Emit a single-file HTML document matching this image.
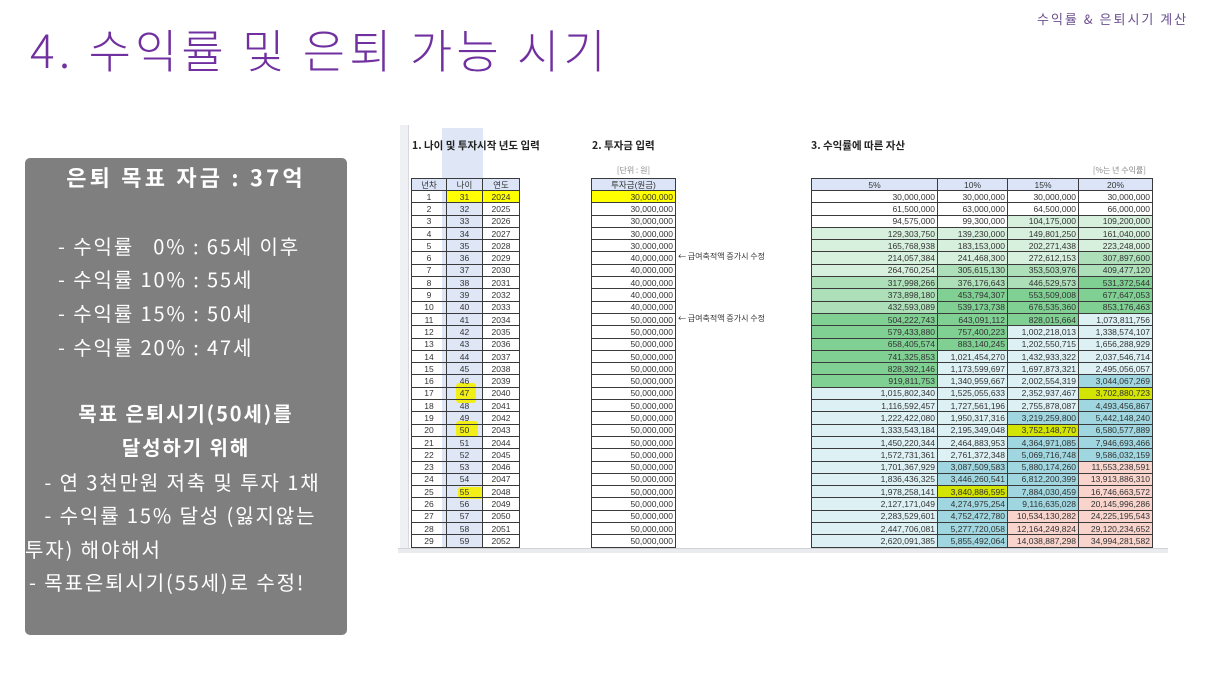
<!DOCTYPE html>
<html><head><meta charset="utf-8"><style>
body{margin:0;width:1216px;height:684px;background:#fff;position:relative;overflow:hidden;font-family:"Liberation Sans","Noto Sans CJK KR",sans-serif}
.a{position:absolute;white-space:nowrap}
.title{left:30px;top:16px;font-size:46px;color:#7030a0;font-weight:300;font-family:"Noto Sans CJK KR",sans-serif;letter-spacing:4.1px}
.tr{left:1037px;top:9px;font-size:13px;color:#6b4f8f;font-family:"Noto Sans CJK KR",sans-serif;letter-spacing:2px}
.box{left:25px;top:158px;width:322px;height:477px;background:#7f7f7f;border-radius:5px}
.w{color:#fff;font-family:"Noto Sans CJK KR",sans-serif;font-size:20px;line-height:24px;letter-spacing:1.9px}
.clip{position:absolute;left:398px;top:125px;width:770px;height:428px;overflow:hidden}
table{border-collapse:collapse;table-layout:fixed;position:absolute;font-size:8.5px;color:#333;font-family:"Liberation Sans","Noto Sans CJK KR",sans-serif}
td{border:1px solid #3a3a3a;height:11.3px;padding:0 2px;line-height:10px;overflow:hidden;white-space:nowrap}
table.c td{text-align:center}
table.r td{text-align:right}
tr.h td{background:#dbe5f7;text-align:center;height:11px}
.y{background:#ffff00}
.L{background:#d7f0dd}.M{background:#ade0b9}.S{background:#80cf93}.C{background:#ddf1f5}.D{background:#9fd6df}.P{background:#f8d4cd}
.hy{background:#d2e400}
.sec{font-size:10.5px;font-weight:bold;color:#222;font-family:"Noto Sans CJK KR",sans-serif}
.sm{font-size:8px;color:#888;font-family:"Noto Sans CJK KR",sans-serif}
.note{font-size:8px;color:#333;font-family:"Noto Sans CJK KR",sans-serif}
.mk{position:absolute;background:#f4f000;opacity:.9;border-radius:3px}
</style></head><body>
<div class="a title">4. 수익률 및 은퇴 가능 시기</div>
<div class="a tr">수익률 &amp; 은퇴시기 계산</div>
<div class="a box"></div>
<div class="a w" style="left:25px;width:322px;text-align:center;top:165px;font-size:22px;font-weight:bold;letter-spacing:3.2px">은퇴 목표 자금 : 37억</div>
<div class="a w" style="left:58px;top:234px">- 수익률 &nbsp;&nbsp;0% : 65세 이후</div>
<div class="a w" style="left:58px;top:267px">- 수익률 10% : 55세</div>
<div class="a w" style="left:58px;top:301px">- 수익률 15% : 50세</div>
<div class="a w" style="left:58px;top:335px">- 수익률 20% : 47세</div>
<div class="a w" style="left:25px;width:322px;text-align:center;top:401px;font-weight:bold">목표 은퇴시기(50세)를</div>
<div class="a w" style="left:25px;width:322px;text-align:center;top:435px;font-weight:bold">달성하기 위해</div>
<div class="a w" style="left:38px;top:470px">&nbsp;- 연 3천만원 저축 및 투자 1채</div>
<div class="a w" style="left:38px;top:503px">&nbsp;- 수익률 15% 달성 (잃지않는</div>
<div class="a w" style="left:25px;top:537px">투자) 해야해서</div>
<div class="a w" style="left:29px;top:570px">- 목표은퇴시기(55세)로 수정!</div>

<div class="clip">
<div style="position:absolute;left:2px;top:0;width:8px;height:428px;background:#eef0f3;border-right:1px solid #d6d9de"></div>
<div style="position:absolute;left:44px;top:3px;width:41px;height:425px;background:#dfe6f6"></div>
<div class="mk" style="left:58px;top:258px;width:20px;height:20px"></div>
<div class="mk" style="left:58px;top:296px;width:22px;height:16px"></div>
<div class="mk" style="left:60px;top:362px;width:25px;height:12px"></div>
<div class="a sec" style="left:14px;top:13px">1. 나이 및 투자시작 년도 입력</div>
<div class="a sec" style="left:194px;top:13px">2. 투자금 입력</div>
<div class="a sec" style="left:413px;top:13px">3. 수익률에 따른 자산</div>
<div class="a sm" style="left:193px;width:85px;text-align:center;top:40px">[단위 : 원]</div>
<div class="a sm" style="left:660px;width:88px;text-align:right;top:40px">[%는 년 수익률]</div>
<div class="a note" style="left:280px;top:126px">← 급여축적액 증가시 수정</div>
<div class="a note" style="left:280px;top:188px">← 급여축적액 증가시 수정</div>

<table class="c" style="left:13px;top:53px;width:108px">
<colgroup><col style="width:35px"><col style="width:36px"><col style="width:37px"></colgroup>
<tr class="h"><td>년차</td><td>나이</td><td>연도</td></tr>
<tr><td>1</td><td class="y">31</td><td class="y">2024</td></tr>
<tr><td>2</td><td>32</td><td>2025</td></tr><tr><td>3</td><td>33</td><td>2026</td></tr>
<tr><td>4</td><td>34</td><td>2027</td></tr><tr><td>5</td><td>35</td><td>2028</td></tr>
<tr><td>6</td><td>36</td><td>2029</td></tr><tr><td>7</td><td>37</td><td>2030</td></tr>
<tr><td>8</td><td>38</td><td>2031</td></tr><tr><td>9</td><td>39</td><td>2032</td></tr>
<tr><td>10</td><td>40</td><td>2033</td></tr><tr><td>11</td><td>41</td><td>2034</td></tr>
<tr><td>12</td><td>42</td><td>2035</td></tr><tr><td>13</td><td>43</td><td>2036</td></tr>
<tr><td>14</td><td>44</td><td>2037</td></tr><tr><td>15</td><td>45</td><td>2038</td></tr>
<tr><td>16</td><td>46</td><td>2039</td></tr>
<tr><td>17</td><td>47</td><td>2040</td></tr>
<tr><td>18</td><td>48</td><td>2041</td></tr>
<tr><td>19</td><td>49</td><td>2042</td></tr>
<tr><td>20</td><td>50</td><td>2043</td></tr>
<tr><td>21</td><td>51</td><td>2044</td></tr><tr><td>22</td><td>52</td><td>2045</td></tr>
<tr><td>23</td><td>53</td><td>2046</td></tr><tr><td>24</td><td>54</td><td>2047</td></tr>
<tr><td>25</td><td>55</td><td>2048</td></tr>
<tr><td>26</td><td>56</td><td>2049</td></tr><tr><td>27</td><td>57</td><td>2050</td></tr>
<tr><td>28</td><td>58</td><td>2051</td></tr><tr><td>29</td><td>59</td><td>2052</td></tr>
<tr><td>30</td><td style="border:1px solid #3a7bd5">60</td><td>2053</td></tr>
</table>

<table class="r" style="left:193px;top:53px;width:85px">
<tr class="h"><td>투자금(원금)</td></tr>
<tr><td class="y">30,000,000</td></tr>
<tr><td>30,000,000</td></tr><tr><td>30,000,000</td></tr><tr><td>30,000,000</td></tr><tr><td>30,000,000</td></tr>
<tr><td>40,000,000</td></tr><tr><td>40,000,000</td></tr><tr><td>40,000,000</td></tr><tr><td>40,000,000</td></tr><tr><td>40,000,000</td></tr>
<tr><td>50,000,000</td></tr><tr><td>50,000,000</td></tr><tr><td>50,000,000</td></tr><tr><td>50,000,000</td></tr><tr><td>50,000,000</td></tr>
<tr><td>50,000,000</td></tr><tr><td>50,000,000</td></tr><tr><td>50,000,000</td></tr><tr><td>50,000,000</td></tr><tr><td>50,000,000</td></tr>
<tr><td>50,000,000</td></tr><tr><td>50,000,000</td></tr><tr><td>50,000,000</td></tr><tr><td>50,000,000</td></tr><tr><td>50,000,000</td></tr>
<tr><td>50,000,000</td></tr><tr><td>50,000,000</td></tr><tr><td>50,000,000</td></tr><tr><td>50,000,000</td></tr><tr><td>50,000,000</td></tr>
</table>

<table class="r" style="left:413px;top:53px;width:341px">
<colgroup><col style="width:126px"><col style="width:70px"><col style="width:71px"><col style="width:74px"></colgroup>
<tr class="h"><td>5%</td><td>10%</td><td>15%</td><td>20%</td></tr>
<tr><td>30,000,000</td><td>30,000,000</td><td>30,000,000</td><td>30,000,000</td></tr>
<tr><td>61,500,000</td><td>63,000,000</td><td>64,500,000</td><td>66,000,000</td></tr>
<tr><td>94,575,000</td><td>99,300,000</td><td class="L">104,175,000</td><td class="L">109,200,000</td></tr>
<tr><td class="L">129,303,750</td><td class="L">139,230,000</td><td class="L">149,801,250</td><td class="L">161,040,000</td></tr>
<tr><td class="L">165,768,938</td><td class="L">183,153,000</td><td class="L">202,271,438</td><td class="L">223,248,000</td></tr>
<tr><td class="L">214,057,384</td><td class="L">241,468,300</td><td class="L">272,612,153</td><td class="M">307,897,600</td></tr>
<tr><td class="L">264,760,254</td><td class="M">305,615,130</td><td class="M">353,503,976</td><td class="M">409,477,120</td></tr>
<tr><td class="M">317,998,266</td><td class="M">376,176,643</td><td class="M">446,529,573</td><td class="S">531,372,544</td></tr>
<tr><td class="M">373,898,180</td><td class="S">453,794,307</td><td class="S">553,509,008</td><td class="S">677,647,053</td></tr>
<tr><td class="M">432,593,089</td><td class="S">539,173,738</td><td class="S">676,535,360</td><td class="S">853,176,463</td></tr>
<tr><td class="S">504,222,743</td><td class="S">643,091,112</td><td class="S">828,015,664</td><td class="C">1,073,811,756</td></tr>
<tr><td class="S">579,433,880</td><td class="S">757,400,223</td><td class="C">1,002,218,013</td><td class="C">1,338,574,107</td></tr>
<tr><td class="S">658,405,574</td><td class="S">883,140,245</td><td class="C">1,202,550,715</td><td class="C">1,656,288,929</td></tr>
<tr><td class="S">741,325,853</td><td class="C">1,021,454,270</td><td class="C">1,432,933,322</td><td class="C">2,037,546,714</td></tr>
<tr><td class="S">828,392,146</td><td class="C">1,173,599,697</td><td class="C">1,697,873,321</td><td class="C">2,495,056,057</td></tr>
<tr><td class="S">919,811,753</td><td class="C">1,340,959,667</td><td class="C">2,002,554,319</td><td class="D">3,044,067,269</td></tr>
<tr><td class="C">1,015,802,340</td><td class="C">1,525,055,633</td><td class="C">2,352,937,467</td><td class="hy">3,702,880,723</td></tr>
<tr><td class="C">1,116,592,457</td><td class="C">1,727,561,196</td><td class="C">2,755,878,087</td><td class="D">4,493,456,867</td></tr>
<tr><td class="C">1,222,422,080</td><td class="C">1,950,317,316</td><td class="D">3,219,259,800</td><td class="D">5,442,148,240</td></tr>
<tr><td class="C">1,333,543,184</td><td class="C">2,195,349,048</td><td class="hy">3,752,148,770</td><td class="D">6,580,577,889</td></tr>
<tr><td class="C">1,450,220,344</td><td class="C">2,464,883,953</td><td class="D">4,364,971,085</td><td class="D">7,946,693,466</td></tr>
<tr><td class="C">1,572,731,361</td><td class="C">2,761,372,348</td><td class="D">5,069,716,748</td><td class="D">9,586,032,159</td></tr>
<tr><td class="C">1,701,367,929</td><td class="D">3,087,509,583</td><td class="D">5,880,174,260</td><td class="P">11,553,238,591</td></tr>
<tr><td class="C">1,836,436,325</td><td class="D">3,446,260,541</td><td class="D">6,812,200,399</td><td class="P">13,913,886,310</td></tr>
<tr><td class="C">1,978,258,141</td><td class="hy">3,840,886,595</td><td class="D">7,884,030,459</td><td class="P">16,746,663,572</td></tr>
<tr><td class="C">2,127,171,049</td><td class="D">4,274,975,254</td><td class="D">9,116,635,028</td><td class="P">20,145,996,286</td></tr>
<tr><td class="C">2,283,529,601</td><td class="D">4,752,472,780</td><td class="P">10,534,130,282</td><td class="P">24,225,195,543</td></tr>
<tr><td class="C">2,447,706,081</td><td class="D">5,277,720,058</td><td class="P">12,164,249,824</td><td class="P">29,120,234,652</td></tr>
<tr><td class="C">2,620,091,385</td><td class="D">5,855,492,064</td><td class="P">14,038,887,298</td><td class="P">34,994,281,582</td></tr>
<tr><td class="C">2,801,095,954</td><td class="D">6,491,041,270</td><td class="P">16,194,720,393</td><td class="P">42,043,137,898</td></tr>
</table>
<div style="position:absolute;left:0;top:423px;width:770px;height:5px;background:#e9ebef;border-top:1px solid #d0d3d8"></div>
</div>
</body></html>
